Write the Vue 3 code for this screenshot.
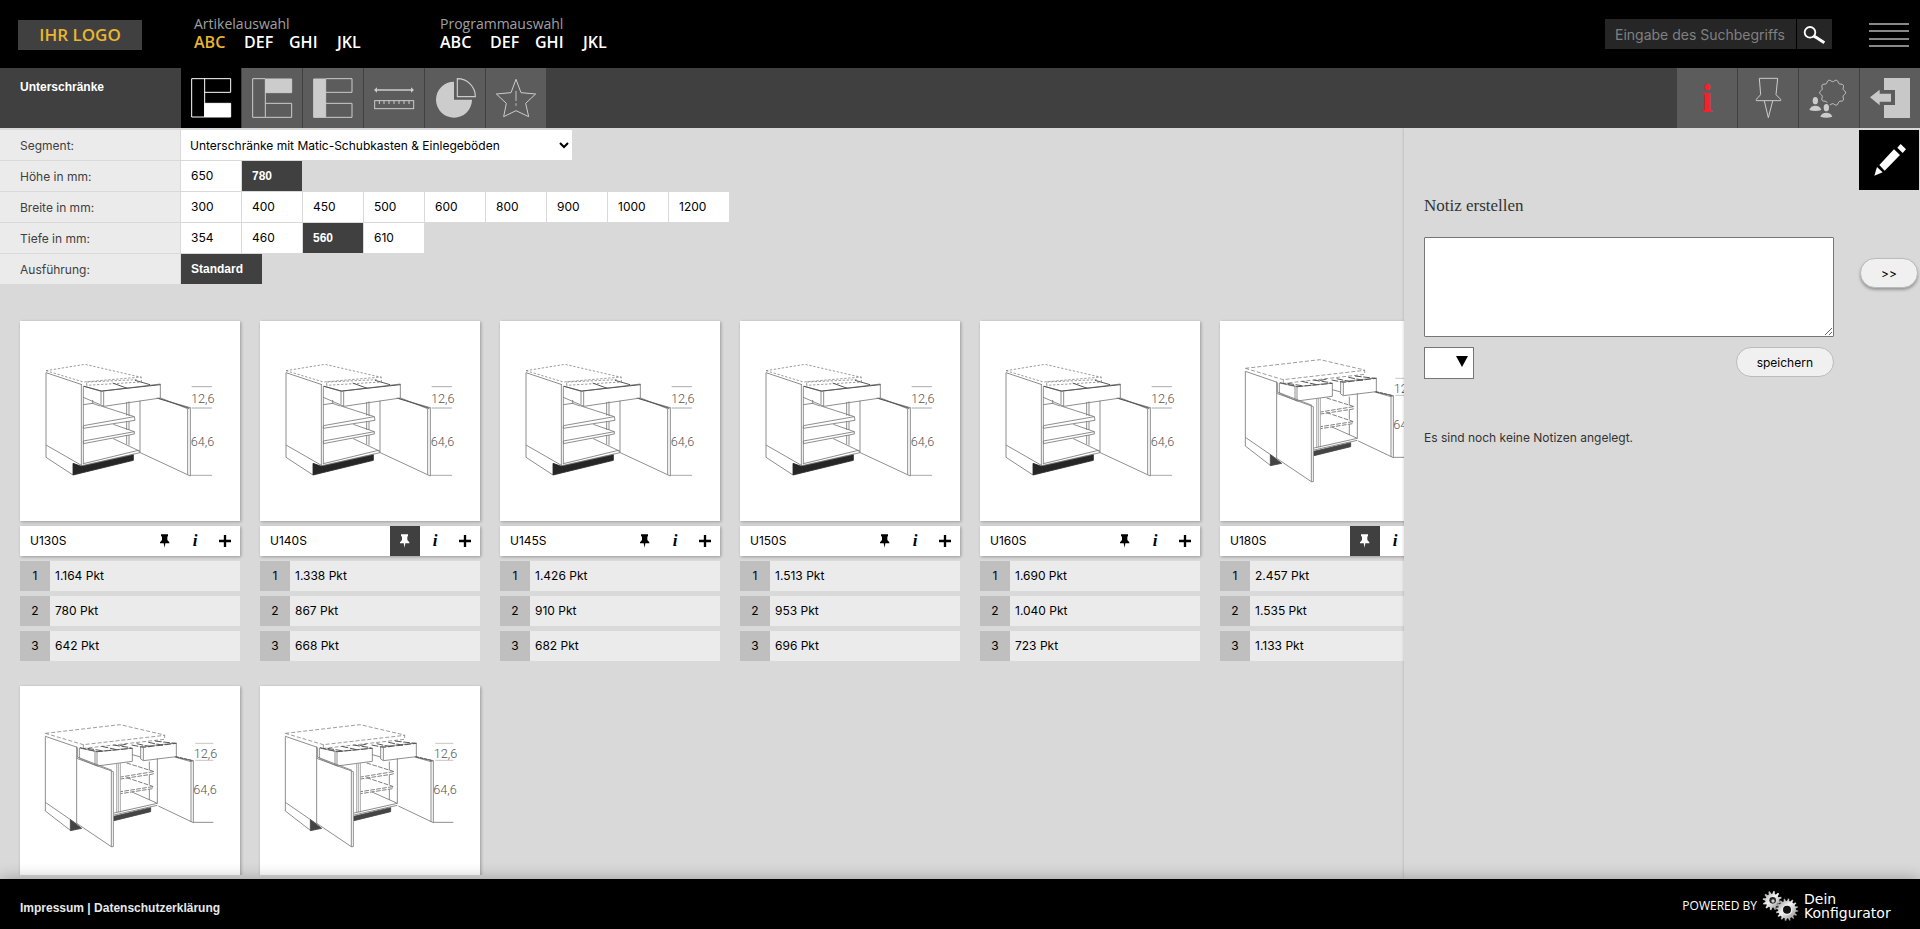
<script setup>
import { ref } from 'vue'

const menus = [
  { title: 'Artikelauswahl', items: ['ABC', 'DEF', 'GHI', 'JKL'], active: 'ABC' },
  { title: 'Programmauswahl', items: ['ABC', 'DEF', 'GHI', 'JKL'], active: '' }
]

const filters = ref([
  { label: 'Höhe in mm:', options: ['650', '780'], value: '780' },
  { label: 'Breite in mm:', options: ['300', '400', '450', '500', '600', '800', '900', '1000', '1200'], value: '' },
  { label: 'Tiefe in mm:', options: ['354', '460', '560', '610'], value: '560' },
  { label: 'Ausführung:', options: ['Standard'], value: 'Standard' }
])

const articles = ref([
  { name: 'U130S', doors: 1, pinned: false, prices: ['1.164', '780', '642'] },
  { name: 'U140S', doors: 1, pinned: true, prices: ['1.338', '867', '668'] },
  { name: 'U145S', doors: 1, pinned: false, prices: ['1.426', '910', '682'] },
  { name: 'U150S', doors: 1, pinned: false, prices: ['1.513', '953', '696'] },
  { name: 'U160S', doors: 1, pinned: false, prices: ['1.690', '1.040', '723'] },
  { name: 'U180S', doors: 2, pinned: true, prices: ['2.457', '1.535', '1.133'] },
  { name: '', doors: 2, pinned: false, prices: [] },
  { name: '', doors: 2, pinned: false, prices: [] }
])

const note = ref('')

function gear(cx, cy, outer, inner, teeth) {
  const pts = []
  const step = (Math.PI * 2) / teeth
  for (let i = 0; i < teeth; i++) {
    for (const [f, r] of [[0, inner], [0.2, outer], [0.5, outer], [0.7, inner]]) {
      const a = (i + f) * step
      pts.push(`${(cx + r * Math.cos(a)).toFixed(1)},${(cy + r * Math.sin(a)).toFixed(1)}`)
    }
  }
  return pts.join(' ')
}

// Scalloped ring with soft knobs
function scallop(cx, cy, radius, depth, knobs) {
  const pts = []
  for (let i = 0; i < 120; i++) {
    const a = (i / 120) * Math.PI * 2
    const r = radius + depth * Math.cos(a * knobs)
    pts.push(`${(cx + r * Math.cos(a)).toFixed(1)},${(cy + r * Math.sin(a)).toFixed(1)}`)
  }
  return pts.join(' ')
}
</script>

<template>
  <div class="page">
    <header class="top">
      <div class="logo">IHR LOGO</div>
      <nav v-for="m in menus" :key="m.title" class="menu">
        <div class="menu-title">{{ m.title }}</div>
        <div class="menu-items">
          <a v-for="i in m.items" :key="i" href="#" :class="{ on: i === m.active }">{{ i }}</a>
        </div>
      </nav>
      <form class="search" @submit.prevent>
        <input type="text" aria-label="Suche" placeholder="Eingabe des Suchbegriffs" />
        <button type="submit" aria-label="Suchen">
          <svg viewBox="651 57 105 90" width="35" height="30">
            <circle cx="690" cy="97" r="16" fill="none" stroke="#fff" stroke-width="5.5" />
            <path d="M701 108L708 112L733 128" fill="none" stroke="#fff" stroke-width="9" />
          </svg>
        </button>
      </form>
      <button class="burger" type="button" aria-label="Menü"><i></i><i></i><i></i><i></i></button>
    </header>

    <div class="bar">
      <div class="bar-title">Unterschränke</div>
      <button class="tab active" type="button" aria-label="Unterschränke">
        <svg viewBox="33 9 180 180" fill="none" stroke="#fff" stroke-width="3">
          <path d="M65 41H182V82H104M104 41V156M65 41V156H104" />
          <path d="M104 115H182V156H104Z" fill="#fff" />
        </svg>
      </button>
      <button class="tab" type="button" aria-label="Oberschränke">
        <svg viewBox="216 9 180 180" fill="none" stroke="#ccc" stroke-width="3">
          <path d="M248 41H286V157H248ZM286 115H365V157H286" />
          <path d="M287 42H365V83H287Z" fill="#ccc" />
        </svg>
      </button>
      <button class="tab" type="button" aria-label="Hochschränke">
        <svg viewBox="399 9 180 180" fill="none" stroke="#ccc" stroke-width="3">
          <path d="M467 41H546V82H467M467 115H546V157H467" />
          <path d="M431 42H467V157H431Z" fill="#ccc" />
        </svg>
      </button>
      <button class="tab" type="button" aria-label="Maße">
        <svg viewBox="582 9 180 180" fill="none" stroke="#ccc" stroke-width="3">
          <path d="M620 75H724" stroke-width="4" />
          <path d="M612 75L621 67V83ZM732 75L723 67V83Z" fill="#ccc" stroke="none" />
          <rect x="614" y="107" width="117" height="24" />
          <path d="M628 107V117M642 107V117M657 107V117M672 107V117M687 107V117M702 107V117M717 107V117" />
        </svg>
      </button>
      <button class="tab" type="button" aria-label="Auswertung">
        <svg viewBox="765 9 180 180">
          <path d="M852 50A54 54 0 1 0 906 104H852Z" fill="#ccc" />
          <path d="M862 41A54 54 0 0 1 916 95H862Z" fill="none" stroke="#ccc" stroke-width="3.5" />
        </svg>
      </button>
      <button class="tab" type="button" aria-label="Neuheiten">
        <svg viewBox="948 9 180 180" fill="none" stroke="#ccc" stroke-width="3">
          <path d="M1038 43L1053 83L1097 87L1067 115L1076 155L1038 137L1001 155L1009 115L979 87L1023 83Z" />
          <path d="M1038 78V108M1038 115V122" stroke="#999" stroke-width="5" />
        </svg>
      </button>
      <button class="tab info first-right" type="button" aria-label="Information">i</button>
      <button class="tab" type="button" aria-label="Merkzettel">
        <svg viewBox="474 204 180 180" fill="none" stroke="#ccc" stroke-width="3">
          <path d="M538 235H593L588 284L602 298V302H529V298L542 284ZM553 303L565 353L578 303" />
        </svg>
      </button>
      <button class="tab" type="button" aria-label="Benutzer">
        <svg viewBox="657 204 180 180" fill="#ccc">
          <polygon :points="scallop(758, 278, 36, 3, 10)" fill="none" stroke="#ccc" stroke-width="3" />
          <ellipse cx="706" cy="302" rx="8" ry="11" />
          <path d="M688 330Q692 317 706 317Q720 317 724 330Q706 336 688 330Z" />
          <ellipse cx="739" cy="322" rx="12" ry="14" fill="#5c5c5c" />
          <ellipse cx="739" cy="323" rx="8" ry="11" />
          <path d="M721 350Q725 338 739 338Q753 338 757 350Q739 356 721 350Z" />
        </svg>
      </button>
      <button class="tab" type="button" aria-label="Abmelden">
        <svg viewBox="840 204 180 180" fill="#c8c8c8">
          <path d="M912 234H990V354H912V315H945V270H912Z" />
          <path d="M870 292L899 269V281H933V305H899V316Z" />
        </svg>
      </button>
    </div>

    <main class="main">
      <section class="content">
        <div class="filters">
          <div class="row">
            <label class="label" for="segment">Segment:</label>
            <select id="segment" class="segment">
              <option>Unterschränke mit Matic-Schubkasten &amp; Einlegeböden</option>
            </select>
          </div>
          <div v-for="f in filters" :key="f.label" class="row">
            <div class="label">{{ f.label }}</div>
            <button
              v-for="o in f.options"
              :key="o"
              type="button"
              class="opt"
              :class="{ on: o === f.value }"
              @click="f.value = o"
            >{{ o }}</button>
          </div>
        </div>

        <div class="cards">
          <article v-for="(a, k) in articles" :key="k" class="card">
            <div class="pic">
              <svg v-if="a.doors === 1" class="drawing" viewBox="60 33 660 600" fill="none" stroke="#777" stroke-width="2.5">
                <path d="M138 182L255 163L424 202V216L260 226M138 182L250 216L424 201M260 216L410 209M260 226V216" stroke="#888" stroke-dasharray="7 5" />
                <path d="M138 188V442L219 495L246 467M138 188L246 224M138 405L246 467" />
                <path d="M244 222V468M250 228V463" />
                <path d="M219 460L244 469L400 434V451L219 495Z" fill="#262626" stroke="#262626" />
                <path d="M246 467L420 428L415 421L250 461M340 386L420 424" />
                <path d="M250 347L403 320L405 331L250 355M300 287L403 320M250 393L403 365V372L250 401M250 393L250 401M340 343L403 365M250 349V356" />
                <path d="M380 276V317M387 274V318M380 334V360M387 334V360M380 375V403M387 375V406M420 272V428" />
                <path d="M250 228L303 244L481 222V264L312 289L250 262M303 244V283M311 245V288M250 284L278 280L300 288M278 270V282" />
                <path d="M252 229L305 243L481 224M405 211L450 224M338 219L382 235" stroke="#555" stroke-width="3" />
                <path d="M470 264L571 293V498L421 428M482 264L563 296V494M563 296L571 293" />
                <path d="M475 265L566 294" stroke="#555" stroke-width="3" />
                <path d="M575 230H636M575 294H636M571 496H636" stroke="#999" />
                <g class="dim"><text x="573" y="279">12,6</text><text x="572" y="409">64,6</text></g>
              </svg>
              <svg v-else class="drawing" viewBox="60 33 660 600" fill="none" stroke="#777" stroke-width="2.5">
                <path d="M136 175L360 149L494 180V193L253 220M136 175L250 209L494 181M250 209V219" stroke="#888" stroke-dasharray="12 6" />
                <path d="M136 184V408L211 466M136 184L232 217M136 382L232 448" />
                <path d="M211 434L245 460L211 467Z" fill="#444" stroke="#444" />
                <path d="M342 424L452 398V410L342 437Z" fill="#444" stroke="#444" />
                <path d="M230 215V445L334 515M230 250L340 290M232 246L336 286M334 288V515H340V290M232 218V247M238 219V249" />
                <path d="M238 219L291 230L397 219V259L291 273L238 250M285 230V270M291 230V272" />
                <path d="M422 215L529 204V245L430 257L422 252V215M430 218V256M397 239L422 246" />
                <path d="M240 218L292 230L397 220M262 220L305 227M305 214L350 224M340 210L392 218M395 210L430 217L529 205M410 206L450 215M445 202L490 211M465 198L525 205M380 207L355 213" stroke="#555" stroke-width="3" stroke-dasharray="20 5" />
                <path d="M350 264V412M355 264V412M361 264V412" stroke="#999" />
                <path d="M380 264L460 289V297L362 312M460 290L362 306M380 308L458 334V341L362 356M458 335L362 350" stroke="#666" stroke-dasharray="14 4" />
                <path d="M396 351L472 385M342 414L472 385V250M342 420L472 391M448 260V286M448 299V329M448 343V375" />
                <path d="M529 246L580 257V443L475 393M524 246L573 260V441M573 260L580 257" />
                <path d="M527 245L577 257" stroke="#444" stroke-width="3" stroke-dasharray="10 3" />
                <path d="M586 205H640M586 256H640" stroke="#bbb" />
                <path d="M580 442H640" />
                <g class="dim"><text x="581" y="249">12,6</text><text x="580" y="356">64,6</text></g>
              </svg>
            </div>
            <template v-if="a.name">
              <div class="head">
                <span class="name">{{ a.name }}</span>
                <button type="button" class="act" :class="{ on: a.pinned }" aria-label="Merken" @click="a.pinned = !a.pinned">
                  <svg viewBox="450 648 90 90" fill="currentColor">
                    <path d="M483 673H504V678L502 680V690L508 697V700H496L494 713L491 700H480V697L486 690V680L483 678Z" />
                  </svg>
                </button>
                <button type="button" class="act i" aria-label="Info">i</button>
                <button type="button" class="act" aria-label="Hinzufügen">
                  <svg viewBox="630 648 90 90" fill="none" stroke="currentColor" stroke-width="7">
                    <path d="M657 693H693M675 675V711" />
                  </svg>
                </button>
              </div>
              <div v-for="(p, n) in a.prices" :key="n" class="price">
                <span class="num">{{ n + 1 }}</span><span>{{ p }} Pkt</span>
              </div>
            </template>
          </article>
        </div>
      </section>

      <aside class="panel">
        <div class="notes">
          <h2><label for="note">Notiz erstellen</label></h2>
          <textarea id="note" v-model="note"></textarea>
          <div class="note-actions">
            <div class="mark">
              <select aria-label="Markierung"><option></option></select>
              <svg viewBox="0 0 12 12" width="12" height="12"><path d="M0 1H12L6 12Z" /></svg>
            </div>
            <button type="button" class="pill">speichern</button>
          </div>
          <p>Es sind noch keine Notizen angelegt.</p>
        </div>
        <div class="side">
          <button type="button" class="pencil" aria-label="Notiz">
            <svg viewBox="837 390 180 180" fill="#fff">
              <path d="M883 527L891 501L908 517Z" />
              <path d="M898 495L942 448L960 465L914 512Z" />
              <path d="M952 443L962 432L978 448L968 459Z" />
            </svg>
          </button>
          <button type="button" class="pill next">&gt;&gt;</button>
        </div>
      </aside>
    </main>

    <footer class="foot">
      <div class="legal"><a href="#">Impressum</a> | <a href="#">Datenschutzerklärung</a></div>
      <div class="powered">
        <span>POWERED BY</span>
        <svg viewBox="366 57 111 93" width="37" height="31">
          <defs>
            <linearGradient id="metal" x1="0" y1="0" x2="1" y2="1">
              <stop offset="0" stop-color="#888" /><stop offset=".45" stop-color="#f4f4f4" /><stop offset="1" stop-color="#777" />
            </linearGradient>
          </defs>
          <polygon :points="gear(397, 86, 29, 21, 12)" fill="url(#metal)" />
          <circle cx="398" cy="85" r="10" fill="#222" /><circle cx="399" cy="87" r="5" fill="#ccc" />
          <polygon :points="gear(441, 113, 34, 27, 16)" fill="url(#metal)" stroke="#000" stroke-width="1" />
          <circle cx="441" cy="113" r="14" fill="#111" stroke="#eee" stroke-width="4" />
        </svg>
        <span class="brand">Dein<br />Konfigurator</span>
      </div>
    </footer>
  </div>
</template>

<style>
body {
  background: #d9d9d9;
}
</style>

<style scoped>
* {
  box-sizing: border-box;
}
.page {
  display: flex;
  flex-direction: column;
  height: 100vh;
  overflow: hidden;
  background: #d9d9d9;
  color: #000;
  font-family: Inter, "Liberation Sans", Arial, sans-serif;
  font-size: 12px;
}
button, input, select, textarea {
  font: inherit;
  margin: 0;
  border: 0;
  border-radius: 0;
  padding: 0;
}
button {
  cursor: pointer;
}
svg {
  display: block;
}
.top {
  display: flex;
  flex: none;
  height: 68px;
  padding: 0 11px 0 18px;
  background: #000;
}
.logo, .menu {
  font-family: "Open Sans", "Noto Sans", sans-serif;
}
.logo {
  width: 124px;
  height: 30px;
  margin: 20px 52px 0 0;
  background: #404040;
  color: #eab530;
  font-size: 17px;
  font-weight: 600;
  line-height: 30px;
  text-align: center;
}
.menu {
  width: 246px;
  padding-top: 15px;
}
.menu-title {
  color: #a0a0a0;
  font-size: 14px;
  line-height: 18px;
}
.menu-items {
  display: grid;
  grid-template-columns: 50px 45px 48px auto;
  font-size: 16px;
  font-weight: 600;
  line-height: 18px;
}
.menu-items a {
  color: #fff;
  text-decoration: none;
}
.menu-items a.on {
  color: #eab530;
}
.search {
  display: flex;
  gap: 1px;
  height: 30px;
  margin: 19px 37px 0 auto;
}
.search input {
  width: 191px;
  padding: 0 10px;
  background: #262626;
  color: #fff;
  font-size: 14px;
}
.search input::placeholder {
  color: #808080;
}
.search button {
  width: 35px;
  background: #262626;
}
.burger {
  display: flex;
  flex-direction: column;
  justify-content: space-between;
  width: 40px;
  height: 24px;
  margin-top: 23px;
  background: none;
}
.burger i {
  height: 2px;
  background: #888;
}
.bar {
  display: flex;
  flex: none;
  gap: 1px;
  height: 60px;
  background: #404040;
}
.bar-title {
  width: 180px;
  padding: 12px 20px;
  color: #fff;
  line-height: 14px;
}
.bar-title, .opt.on, .legal {
  font-family: "Liberation Sans", Arial, sans-serif;
  font-weight: 700;
}
.tab {
  width: 60px;
  height: 60px;
  background: #5c5c5c;
}
.tab.active {
  background: #000;
}
.first-right {
  margin-left: auto;
}
.info {
  color: #f8202c;
  font-family: "Liberation Serif", serif;
  font-size: 40px;
  font-weight: 700;
}
.main {
  display: flex;
  flex: 1;
  min-height: 0;
}
.content {
  flex: 1;
  min-width: 0;
  margin-bottom: 4px;
  padding-top: 2px;
  overflow: hidden;
}
.filters {
  display: flex;
  flex-direction: column;
  gap: 1px;
  margin-bottom: 37px;
}
.row {
  display: flex;
  gap: 1px;
  height: 30px;
  line-height: 32px;
}
.label {
  width: 180px;
  padding-left: 20px;
  background: #ebebeb;
  color: #404040;
}
.segment {
  width: 391px;
  padding-left: 5px;
  background: #fff;
  color: #000;
}
.opt {
  min-width: 60px;
  padding: 0 19px 0 10px;
  background: #fff;
  color: #000;
  line-height: 30px;
  text-align: left;
}
.opt.on {
  background: #404040;
  color: #fff;
}
.cards {
  display: grid;
  grid-template-columns: repeat(6, 220px);
  gap: 25px 20px;
  padding-left: 20px;
}
.card {
  display: flex;
  flex-direction: column;
  gap: 5px;
}
.pic, .head {
  background: #fff;
  box-shadow: 1px 1px 3px rgba(0, 0, 0, 0.3);
}
.pic {
  height: 200px;
}
.drawing {
  width: 220px;
  height: 200px;
}
.dim {
  fill: #555;
  stroke: none;
  font-family: Roboto, sans-serif;
  font-size: 38px;
  font-weight: 300;
}
.head {
  display: flex;
  height: 30px;
}
.name {
  flex: 1;
  padding-left: 10px;
  line-height: 30px;
}
.act {
  width: 30px;
  height: 30px;
  background: none;
  color: #000;
}
.act.on {
  background: #404040;
  color: #fff;
}
.i {
  font-family: "Liberation Serif", serif;
  font-size: 17px;
  font-style: italic;
  font-weight: 700;
}
.price {
  display: flex;
  gap: 5px;
  height: 30px;
  background: #ebebeb;
  line-height: 30px;
}
.num {
  width: 30px;
  background: #bfbfbf;
  text-align: center;
}
.panel {
  display: flex;
  z-index: 1;
  width: 516px;
  box-shadow: 0 0 3px rgba(0, 0, 0, 0.2);
  background: #d9d9d9;
  clip-path: inset(0 0 0 -4px);
}
.notes {
  flex: 1;
  padding: 68px 25px 0 20px;
}
h2 {
  margin: 0 0 21px;
  color: #333;
  font-family: "Liberation Serif", serif;
  font-size: 17px;
  font-weight: 400;
  line-height: 20px;
}
textarea {
  display: block;
  width: 100%;
  height: 100px;
  border: 1px solid #767676;
  border-radius: 1px;
  background: #fff;
}
.note-actions {
  display: flex;
  justify-content: space-between;
  margin-top: 10px;
}
.mark {
  position: relative;
}
.mark select {
  width: 50px;
  height: 32px;
  border: 1px solid #767676;
  background: #fff;
  appearance: none;
}
.mark svg {
  position: absolute;
  top: 8px;
  right: 6px;
  pointer-events: none;
}
.pill {
  height: 30px;
  padding: 0 20px;
  border: 1px solid #bbb;
  border-radius: 15px;
  background: #f0f0f0;
  color: #000;
}
.notes p {
  margin: 51px 0 0;
  color: #333;
  line-height: 16px;
}
.side {
  display: flex;
  flex-direction: column;
  align-items: center;
  gap: 68px;
  width: 61px;
  padding: 2px 1px 0 0;
}
.pencil {
  width: 60px;
  height: 60px;
  background: #000;
}
.next {
  width: 58px;
  box-shadow: 0 2px 3px rgba(0, 0, 0, 0.3);
}
.foot {
  display: flex;
  z-index: 2;
  flex: none;
  align-items: center;
  justify-content: space-between;
  height: 50px;
  padding: 4px 20px 0;
  background: #000;
  box-shadow: 0 0 15px rgba(0, 0, 0, 0.3);
  color: #e8e8e8;
  line-height: 16px;
}
.legal {
  padding-top: 4px;
}
.foot a {
  color: inherit;
  text-decoration: none;
}
.powered {
  display: flex;
  gap: 5px;
  align-items: center;
  color: #fff;
  font-family: "Open Sans", sans-serif;
}
.brand {
  width: 96px;
  font-family: "DejaVu Sans", sans-serif;
  font-size: 14px;
  line-height: 14px;
}
</style>
